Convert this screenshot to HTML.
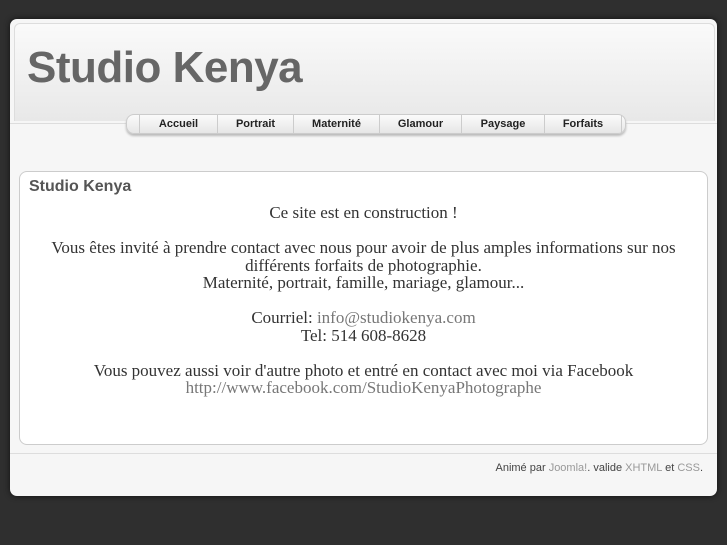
<!DOCTYPE html>
<html><head><meta charset="utf-8"><style>
body{margin:0;width:727px;height:545px;background:#2f2f2f;font-family:"Liberation Sans",sans-serif;overflow:hidden;position:relative}
.panel{position:absolute;left:10px;top:19px;width:707px;height:477px;background:#f6f6f6;border-radius:7px;box-shadow:0 0 6px #111}
.hdr{position:absolute;left:4px;top:4px;width:699px;height:97px;background:linear-gradient(#fafafa,#e8e8e8);border:1px solid #ddd;border-bottom:none;border-radius:6px 6px 0 0}
.line{position:absolute;left:0;top:104px;width:707px;height:1px;background:#ddd}
.title{position:absolute;left:17px;top:24px;font-size:44px;font-weight:bold;color:#666;letter-spacing:-0.5px}
.nav{position:absolute;left:116px;top:95px;width:500px;height:20px;background:linear-gradient(#fbfbfb,#e6e6e6);border:1px solid #ccc;border-radius:8px;box-shadow:0 2px 2px #bbb;display:flex;padding-left:12px;box-sizing:border-box}
.nav span{font-size:11px;font-weight:bold;color:#222;text-align:center;line-height:18px;border-right:1px solid #ccc}
.box{position:absolute;left:9px;top:152px;width:687px;height:272px;background:#fff;border:1px solid #ccc;border-radius:8px}
.box h2{margin:0;position:absolute;left:9px;top:6px;font-size:16px;color:#555}
.txt{position:absolute;left:0;top:32px;width:687px;text-align:center;font-family:"Liberation Serif",serif;font-size:17px;color:#333;line-height:17.5px;white-space:nowrap}
.txt a{color:#777;text-decoration:none}
.fline{position:absolute;left:0;top:434px;width:707px;height:1px;background:#ddd}
.foot{position:absolute;right:14px;top:443px;font-size:11px;color:#444}
.foot a{color:#999}
</style></head><body>
<div class="panel">
<div class="hdr"></div><div class="line"></div>
<div class="title">Studio Kenya</div>
<div class="nav"><span style="width:77px;border-left:1px solid #ccc">Accueil</span><span style="width:75px">Portrait</span><span style="width:85px">Maternité</span><span style="width:81px">Glamour</span><span style="width:82px">Paysage</span><span style="width:76px">Forfaits</span></div>
<div class="box"><h2>Studio Kenya</h2>
<div class="txt">Ce site est en construction !<br><br>Vous êtes invité à prendre contact avec nous pour avoir de plus amples informations sur nos<br>différents forfaits de photographie.<br>Maternité, portrait, famille, mariage, glamour...<br><br>Courriel: <a>info@studiokenya.com</a><br>Tel: 514 608-8628<br><br>Vous pouvez aussi voir d'autre photo et entré en contact avec moi via Facebook<br><a>http://www.facebook.com/StudioKenyaPhotographe</a></div></div>
<div class="fline"></div>
<div class="foot">Animé par <a>Joomla!</a>. valide <a>XHTML</a> et <a>CSS</a>.</div>
</div>
</body></html>
